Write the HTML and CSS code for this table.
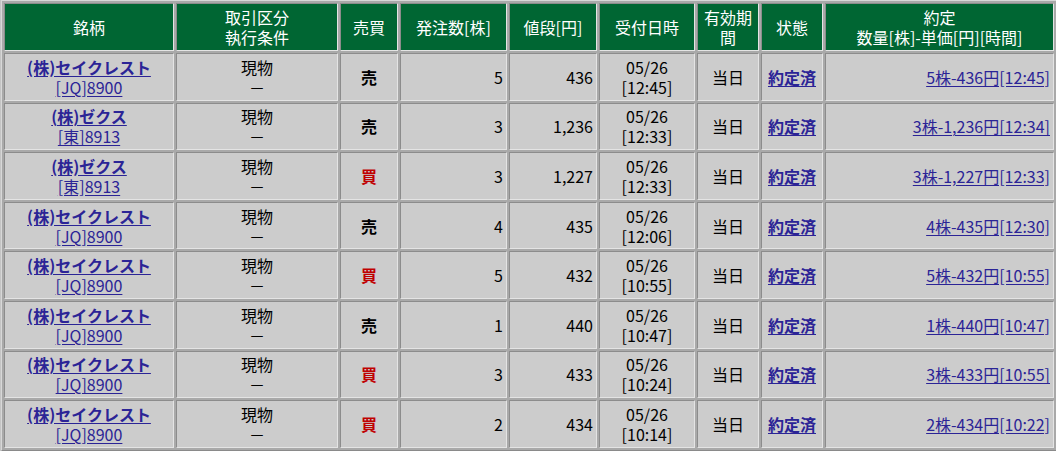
FILE: index.html
```html
<!DOCTYPE html>
<html lang="ja">
<head>
<meta charset="utf-8">
<title>注文約定一覧</title>
<link rel="stylesheet" href="styles.css">
</head>
<body>
<table class="orders">
  <thead>
    <tr>
      <th class="c-name">銘柄</th>
      <th class="c-kind">取引区分<br>執行条件</th>
      <th class="c-side">売買</th>
      <th class="c-qty">発注数[株]</th>
      <th class="c-price">値段[円]</th>
      <th class="c-time">受付日時</th>
      <th class="c-term">有効期<br>間</th>
      <th class="c-state">状態</th>
      <th class="c-exec">約定<br>数量[株]-単価[円][時間]</th>
    </tr>
  </thead>
  <tbody>
    <tr>
      <td class="center"><a class="name" href="#">(株)セイクレスト</a><br><a href="#">[JQ]8900</a></td>
      <td class="center">現物<br>－</td>
      <td class="center side sell">売</td>
      <td class="num">5</td>
      <td class="num">436</td>
      <td class="center">05/26<br>[12:45]</td>
      <td class="center">当日</td>
      <td class="center"><a class="state" href="#">約定済</a></td>
      <td class="num exec"><a href="#">5株-436円[12:45]</a></td>
    </tr>
    <tr>
      <td class="center"><a class="name" href="#">(株)ゼクス</a><br><a href="#">[東]8913</a></td>
      <td class="center">現物<br>－</td>
      <td class="center side sell">売</td>
      <td class="num">3</td>
      <td class="num">1,236</td>
      <td class="center">05/26<br>[12:33]</td>
      <td class="center">当日</td>
      <td class="center"><a class="state" href="#">約定済</a></td>
      <td class="num exec"><a href="#">3株-1,236円[12:34]</a></td>
    </tr>
    <tr>
      <td class="center"><a class="name" href="#">(株)ゼクス</a><br><a href="#">[東]8913</a></td>
      <td class="center">現物<br>－</td>
      <td class="center side buy">買</td>
      <td class="num">3</td>
      <td class="num">1,227</td>
      <td class="center">05/26<br>[12:33]</td>
      <td class="center">当日</td>
      <td class="center"><a class="state" href="#">約定済</a></td>
      <td class="num exec"><a href="#">3株-1,227円[12:33]</a></td>
    </tr>
    <tr>
      <td class="center"><a class="name" href="#">(株)セイクレスト</a><br><a href="#">[JQ]8900</a></td>
      <td class="center">現物<br>－</td>
      <td class="center side sell">売</td>
      <td class="num">4</td>
      <td class="num">435</td>
      <td class="center">05/26<br>[12:06]</td>
      <td class="center">当日</td>
      <td class="center"><a class="state" href="#">約定済</a></td>
      <td class="num exec"><a href="#">4株-435円[12:30]</a></td>
    </tr>
    <tr>
      <td class="center"><a class="name" href="#">(株)セイクレスト</a><br><a href="#">[JQ]8900</a></td>
      <td class="center">現物<br>－</td>
      <td class="center side buy">買</td>
      <td class="num">5</td>
      <td class="num">432</td>
      <td class="center">05/26<br>[10:55]</td>
      <td class="center">当日</td>
      <td class="center"><a class="state" href="#">約定済</a></td>
      <td class="num exec"><a href="#">5株-432円[10:55]</a></td>
    </tr>
    <tr>
      <td class="center"><a class="name" href="#">(株)セイクレスト</a><br><a href="#">[JQ]8900</a></td>
      <td class="center">現物<br>－</td>
      <td class="center side sell">売</td>
      <td class="num">1</td>
      <td class="num">440</td>
      <td class="center">05/26<br>[10:47]</td>
      <td class="center">当日</td>
      <td class="center"><a class="state" href="#">約定済</a></td>
      <td class="num exec"><a href="#">1株-440円[10:47]</a></td>
    </tr>
    <tr>
      <td class="center"><a class="name" href="#">(株)セイクレスト</a><br><a href="#">[JQ]8900</a></td>
      <td class="center">現物<br>－</td>
      <td class="center side buy">買</td>
      <td class="num">3</td>
      <td class="num">433</td>
      <td class="center">05/26<br>[10:24]</td>
      <td class="center">当日</td>
      <td class="center"><a class="state" href="#">約定済</a></td>
      <td class="num exec"><a href="#">3株-433円[10:55]</a></td>
    </tr>
    <tr>
      <td class="center"><a class="name" href="#">(株)セイクレスト</a><br><a href="#">[JQ]8900</a></td>
      <td class="center">現物<br>－</td>
      <td class="center side buy">買</td>
      <td class="num">2</td>
      <td class="num">434</td>
      <td class="center">05/26<br>[10:14]</td>
      <td class="center">当日</td>
      <td class="center"><a class="state" href="#">約定済</a></td>
      <td class="num exec"><a href="#">2株-434円[10:22]</a></td>
    </tr>
  </tbody>
</table>
</body>
</html>
```

FILE: styles.css
```css
html, body {
  margin: 0;
  padding: 0;
  background: #c4c4c4;
}

body {
  font-family: "Noto Sans CJK JP", "Noto Sans", sans-serif;
  font-size: 16px;
  line-height: 20px;
  color: #000;
}

.orders {
  margin: 0 0 0 1px;
  width: 1056px;
  table-layout: fixed;
  border-collapse: separate;
  border-spacing: 2px;
  border: 1px solid;
  border-color: #d8d8d8 #8a8a8a #8a8a8a #d8d8d8;
  background: #a9a9a9;
}

.orders th,
.orders td {
  box-sizing: border-box;
  border: 1px solid;
  border-color: #8c8c8c #e4e4e4 #e4e4e4 #8c8c8c;
  padding: 0 3px;
  vertical-align: middle;
}

.orders th {
  height: 48px;
  background: #006633;
  color: #fff;
  font-weight: normal;
  text-align: center;
}

.orders td {
  height: 47.6px;
  background: #cccccc;
}

.c-name  { width: 170px; }
.c-kind  { width: 162px; }
.c-side  { width: 58px; }
.c-qty   { width: 107px; }
.c-price { width: 88px; }
.c-time  { width: 96px; }
.c-term  { width: 62px; }
.c-state { width: 62px; }
.c-exec  { width: 229px; }

.center { text-align: center; }
.num { text-align: right; }
.exec { padding-right: 1px; }

.orders a {
  color: #2b2496;
  text-decoration: underline;
  text-underline-offset: 2px;
}

.orders a.name,
.orders a.state {
  font-weight: bold;
}

.side { font-weight: bold; }
.sell { color: #000; }
.buy { color: #c00000; }
```
